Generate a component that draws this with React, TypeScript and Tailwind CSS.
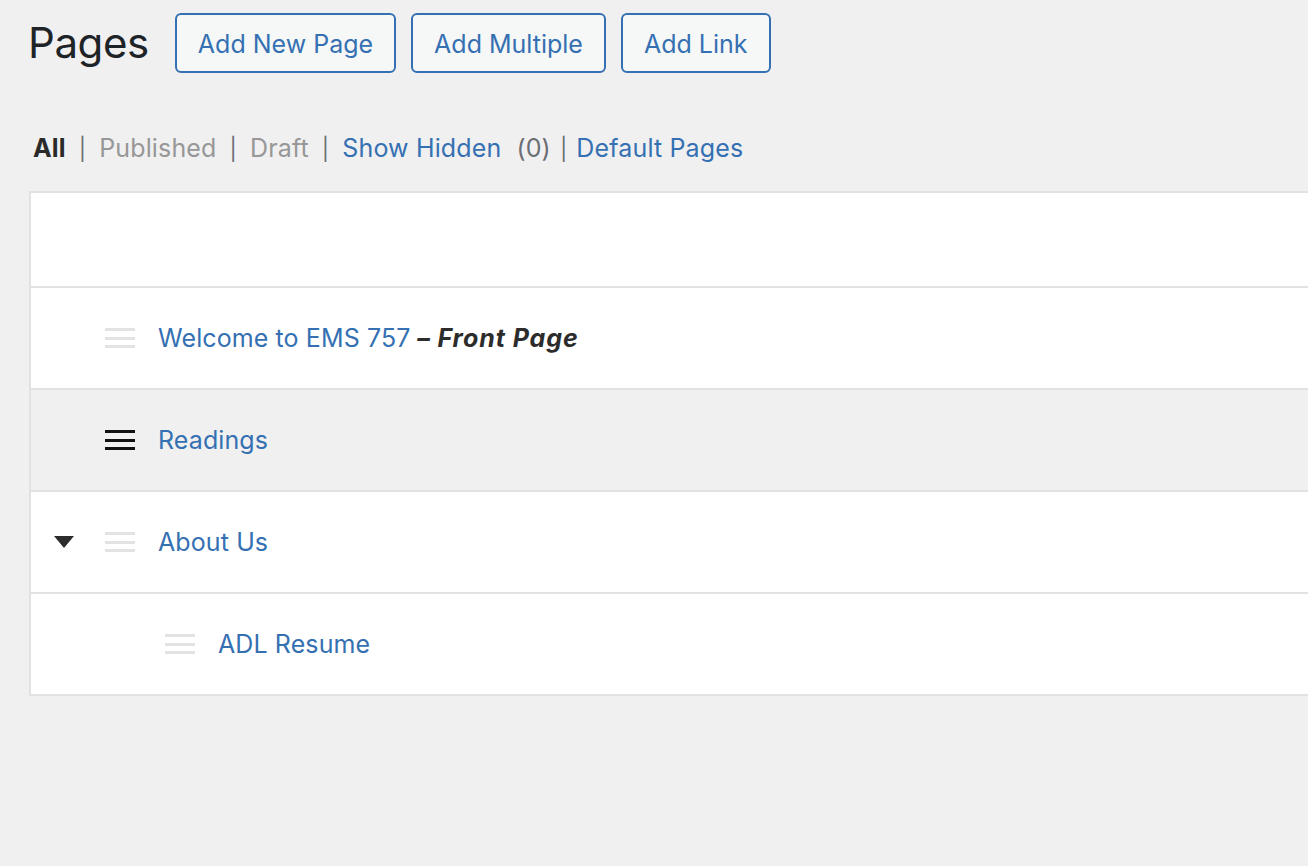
import React from "react";

const LINK = "text-[#3570b2]";

function Handle({ dark }: { dark?: boolean }) {
  const c = dark ? "bg-[#111]" : "bg-[#e3e3e3]";
  return (
    <div className="flex w-[30px] flex-col gap-[5.5px]">
      <div className={`h-[3px] w-full ${c}`} />
      <div className={`h-[3px] w-full ${c}`} />
      <div className={`h-[3px] w-full ${c}`} />
    </div>
  );
}

function Row({
  children,
  bg = "bg-white",
  toggle,
  indent,
  dark,
}: {
  children: React.ReactNode;
  bg?: string;
  toggle?: boolean;
  indent?: boolean;
  dark?: boolean;
}) {
  return (
    <div className={`flex h-[102px] items-center border-t-2 border-[#e2e2e2] ${bg}`}>
      <div className="flex w-[74px] shrink-0 items-center pl-[23px]">
        {toggle && (
          <svg width="20" height="12" viewBox="0 0 20 12">
            <polygon points="0,0 20,0 10,12" fill="#2c2c2c" />
          </svg>
        )}
      </div>
      {indent && <div className="w-[60px] shrink-0" />}
      <Handle dark={dark} />
      <div className="ml-[23px] text-[25px] leading-none tracking-[0.1px]">{children}</div>
    </div>
  );
}

function Sep({ cls = "mx-[13px]" }: { cls?: string }) {
  return <span className={`${cls} text-[22px] text-[#6b6e73]`}>|</span>;
}

export default function App() {
  return (
    <div
      className="min-h-screen w-full overflow-hidden bg-[#f0f0f1]"
      style={{ fontFamily: "Inter, 'Noto Sans', 'Liberation Sans', sans-serif" }}
    >
      <div className="flex items-center pl-[28px] pt-[13px]">
        <h1 className="mr-[26px] text-[42px] font-normal leading-none tracking-[-0.4px] text-[#1d2327]">
          Pages
        </h1>
        <div className="flex gap-[15px]">
          {["Add New Page", "Add Multiple", "Add Link"].map((t) => (
            <button
              key={t}
              className={`h-[60px] rounded-[6px] border-2 border-[#3570b2] bg-[#f6f7f7] px-[21px] pt-[3px] text-[25px] ${LINK}`}
            >
              {t}
            </button>
          ))}
        </div>
      </div>

      <div className="mt-[63px] flex items-center pl-[33px] text-[25px] leading-none tracking-[0.15px]">
        <span className="font-bold text-[#2a2a2a]">All</span>
        <Sep />
        <span className="text-[#979797]">Published</span>
        <Sep />
        <span className="text-[#979797]">Draft</span>
        <Sep />
        <span className={LINK}>Show Hidden</span>
        <span className="ml-[15px] text-[#6b6e73]">(0)</span>
        <Sep cls="mx-[9px]" />
        <span className={LINK}>Default Pages</span>
      </div>

      <div className="ml-[29px] mt-[30px] border-b-2 border-l-2 border-t-2 border-[#e2e2e2] bg-white">
        <div className="h-[93px] bg-white" />
        <Row>
          <span className={LINK}>Welcome to EMS 757</span>
          <span className="font-bold italic tracking-[0.9px] text-[#2c2c2c]"> – Front Page</span>
        </Row>
        <Row bg="bg-[#f0f0f1]" dark>
          <span className={LINK}>Readings</span>
        </Row>
        <Row toggle>
          <span className={LINK}>About Us</span>
        </Row>
        <Row indent>
          <span className={LINK}>ADL Resume</span>
        </Row>
      </div>
    </div>
  );
}
